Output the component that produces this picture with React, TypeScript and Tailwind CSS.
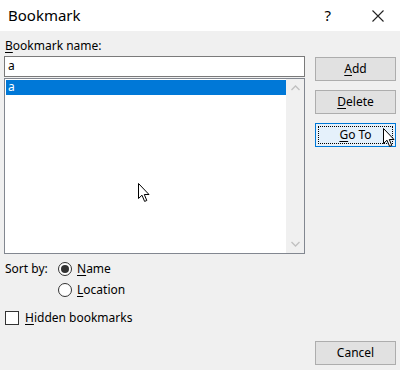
import React from "react";

// Mouse pointer drawn as an overlay
const Pointer = ({ className }: { className: string }) => (
  <svg
    className={className}
    width="13"
    height="20"
    viewBox="0 0 13 20"
    fill="white"
    stroke="black"
    strokeWidth="1"
  >
    <path d="M0.5 0.5 L0.5 15.5 L4 12.2 L6.6 18.4 L8.8 17.5 L6.3 11.5 L11 11.5 Z" />
  </svg>
);

const Btn = ({
  label,
  u,
  focused,
}: {
  label: string;
  u: string;
  focused?: boolean;
}) => {
  const rest = label.slice(u.length);
  return (
    <button
      className={
        focused
          ? "w-[81px] h-[24px] border border-[#0078d7] bg-[#e5f1fb] p-[2px] text-[12px] text-black"
          : "w-[81px] h-[24px] border border-[#adadad] bg-[#e1e1e1] text-[12px] text-black"
      }
    >
      {focused ? (
        <span className="flex h-full w-full items-center justify-center border border-dotted border-black">
          <span className="underline underline-offset-2">{u}</span>
          {rest}
        </span>
      ) : (
        <span>
          <span className="underline underline-offset-2">{u}</span>
          {rest}
        </span>
      )}
    </button>
  );
};

export default function App() {
  return (
    <div
      className="relative w-[400px] h-[370px] bg-[#f0f0f0] overflow-hidden text-black"
      style={{ fontFamily: '"Noto Sans", "Open Sans", sans-serif' }}
    >
      {/* title bar */}
      <div className="flex h-[31px] items-center bg-white">
        <span className="ml-[8px] text-[15px]">Bookmark</span>
        <span className="ml-auto mr-[41px] text-[15px]">?</span>
        <svg width="12" height="12" viewBox="0 0 12 12" className="mr-[16px]" stroke="#222" strokeWidth="1.1">
          <path d="M0.5 0.5 L11.5 11.5 M11.5 0.5 L0.5 11.5" />
        </svg>
      </div>

      <div className="flex">
        {/* left column */}
        <div className="ml-[4px] w-[301px]">
          <div className="mt-[7px] ml-[1px] h-[18px] text-[12px] leading-[16px]">
            <span className="underline underline-offset-2">B</span>ookmark name:
          </div>
          <div className="h-[21px] border border-[#7a7a7a] bg-white px-[3px] text-[12px] leading-[18px]">
            a
          </div>
          <div className="mt-[1px] flex h-[176px] border border-[#828790] bg-white">
            <div className="flex-1 pt-[1px] pl-[1px]">
              <div className="h-[15px] bg-[#0078d7] px-[2px] text-[12px] leading-[14px] text-white">
                a
              </div>
            </div>
            <div className="flex w-[18px] flex-col items-center justify-between bg-[#f0f0f0] py-[6px]">
              <svg width="9" height="6" viewBox="0 0 9 6" fill="none" stroke="#c0c0c0" strokeWidth="1.3">
                <path d="M0.5 5 L4.5 1 L8.5 5" />
              </svg>
              <svg width="9" height="6" viewBox="0 0 9 6" fill="none" stroke="#c0c0c0" strokeWidth="1.3">
                <path d="M0.5 1 L4.5 5 L8.5 1" />
              </svg>
            </div>
          </div>

          <div className="mt-[6px] flex text-[12px] leading-[17px]">
            <span className="ml-[1px] w-[53px]">Sort by:</span>
            <div className="flex flex-col gap-[4px]">
              <label className="flex h-[17px] items-center gap-[5px]">
                <span className="flex h-[14px] w-[14px] items-center justify-center rounded-full border border-[#333] bg-white">
                  <span className="h-[8px] w-[8px] rounded-full bg-[#333]" />
                </span>
                <span>
                  <span className="underline underline-offset-2">N</span>ame
                </span>
              </label>
              <label className="flex h-[17px] items-center gap-[5px]">
                <span className="h-[14px] w-[14px] rounded-full border border-[#333] bg-white" />
                <span>
                  <span className="underline underline-offset-2">L</span>ocation
                </span>
              </label>
            </div>
          </div>

          <label className="mt-[11px] ml-[1px] flex h-[17px] items-center gap-[6px] text-[12px]">
            <span className="h-[14px] w-[14px] border border-[#333] bg-white" />
            <span>
              <span className="underline underline-offset-2">H</span>idden bookmarks
            </span>
          </label>
        </div>

        {/* right column */}
        <div className="ml-[10px] flex flex-col pt-[26px]">
          <div className="flex flex-col gap-[9px]">
            <Btn label="Add" u="A" />
            <Btn label="Delete" u="D" />
            <Btn label="Go To" u="G" focused />
          </div>
          <div className="mt-[192px]">
            <button className="w-[81px] h-[24px] border border-[#adadad] bg-[#e1e1e1] text-[12px]">
              Cancel
            </button>
          </div>
        </div>
      </div>

      <Pointer className="absolute left-[138px] top-[183px]" />
      <Pointer className="absolute left-[383px] top-[128px]" />
    </div>
  );
}
